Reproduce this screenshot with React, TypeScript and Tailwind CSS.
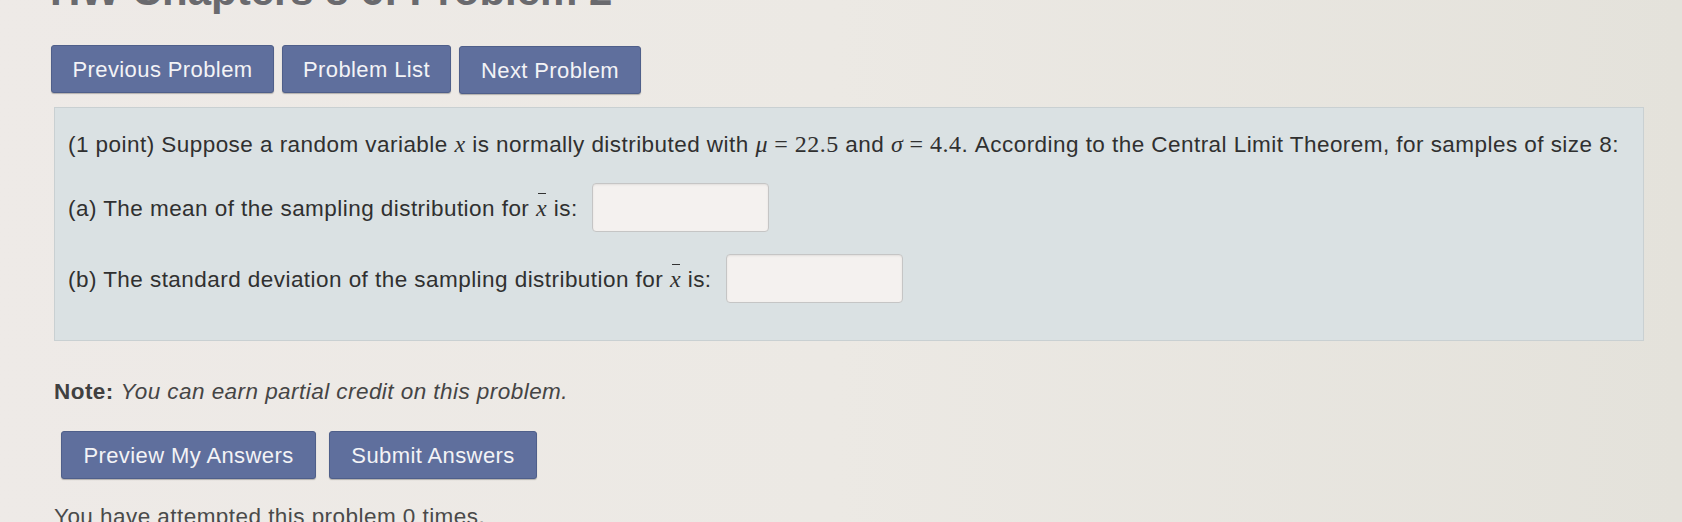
const sans = { fontFamily: '"Liberation Sans", Arial, sans-serif' }

const NavButton = ({ label, className }: { label: string; className: string }) => (
  <button
    className={`h-[48px] rounded-[3px] border border-[#4f5f8a] bg-[#5f6f9d] text-[22px] tracking-[0.4px] text-[#f3f3f6] shadow-[0_1px_1px_rgba(0,0,0,0.25)] ${className}`}
  >
    {label}
  </button>
)

// x with a bar over it, as the math renderer sets it
const XBar = () => (
  <span className="relative inline-block font-['Liberation_Serif'] italic text-[24px]">
    x
    <span className="absolute left-[2px] right-[1px] top-[3px] h-[1.5px] bg-[#333]" />
  </span>
)

const AnswerBox = () => (
  <input
    type="text"
    className="h-[49px] w-[177px] rounded-[4px] border border-[#c5c5c5] bg-[#f4f1ef] shadow-[inset_0_1px_2px_rgba(0,0,0,0.08)]"
  />
)

export default function App() {
  return (
    <div
      style={sans}
      className="h-[522px] w-full overflow-hidden bg-gradient-to-r from-[#eeeae7] via-[#ece9e4] to-[#e4e2db] text-[#303030]"
    >
      <h1 className="-mt-[32px] ml-[50px] h-[46px] text-[42px] font-bold leading-[46px] text-[#6a6a6e]">
        HW Chapters 8 6: Problem 2
      </h1>

      <div className="ml-[51px] mt-[31px] flex gap-[8px]">
        <NavButton label="Previous Problem" className="w-[223px]" />
        <NavButton label="Problem List" className="w-[169px]" />
        <NavButton label="Next Problem" className="mt-[1px] w-[182px]" />
      </div>

      <div className="ml-[54px] mr-[38px] mt-[13px] h-[234px] border border-[#c9d0d2] bg-[#dae1e3] pl-[13px] pt-[22px] text-[22.5px] tracking-[0.45px]">
        <p className="leading-[28px]">
          (1 point) Suppose a random variable{' '}
          <span className="font-['Liberation_Serif'] italic text-[24px]">x</span> is normally distributed
          with <span className="font-['Liberation_Serif'] italic text-[24px]">μ</span>
          <span className="font-['Liberation_Serif'] text-[24px]"> = 22.5</span> and{' '}
          <span className="font-['Liberation_Serif'] italic text-[24px]">σ</span>
          <span className="font-['Liberation_Serif'] text-[24px]"> = 4.4</span>. According to the Central Limit
          Theorem, for samples of size 8:
        </p>

        <div className="mt-[24px] flex items-center gap-[14px]">
          <span>
            (a) The mean of the sampling distribution for <XBar /> is:
          </span>
          <AnswerBox />
        </div>

        <div className="mt-[22px] flex items-center gap-[14px]">
          <span>
            (b) The standard deviation of the sampling distribution for <XBar /> is:
          </span>
          <AnswerBox />
        </div>
      </div>

      <p className="ml-[54px] mt-[37px] text-[22.5px] tracking-[0.45px] leading-[28px]">
        <span className="font-bold text-[#404040]">Note:</span>{' '}
        <i className="text-[#454545]">You can earn partial credit on this problem.</i>
      </p>

      <div className="ml-[61px] mt-[25px] flex gap-[13px]">
        <NavButton label="Preview My Answers" className="w-[255px]" />
        <NavButton label="Submit Answers" className="w-[208px]" />
      </div>

      <p className="ml-[54px] mt-[24px] text-[22.5px] tracking-[0.45px] leading-[28px] text-[#4a4a4a]">
        You have attempted this problem 0 times.
      </p>
    </div>
  )
}
